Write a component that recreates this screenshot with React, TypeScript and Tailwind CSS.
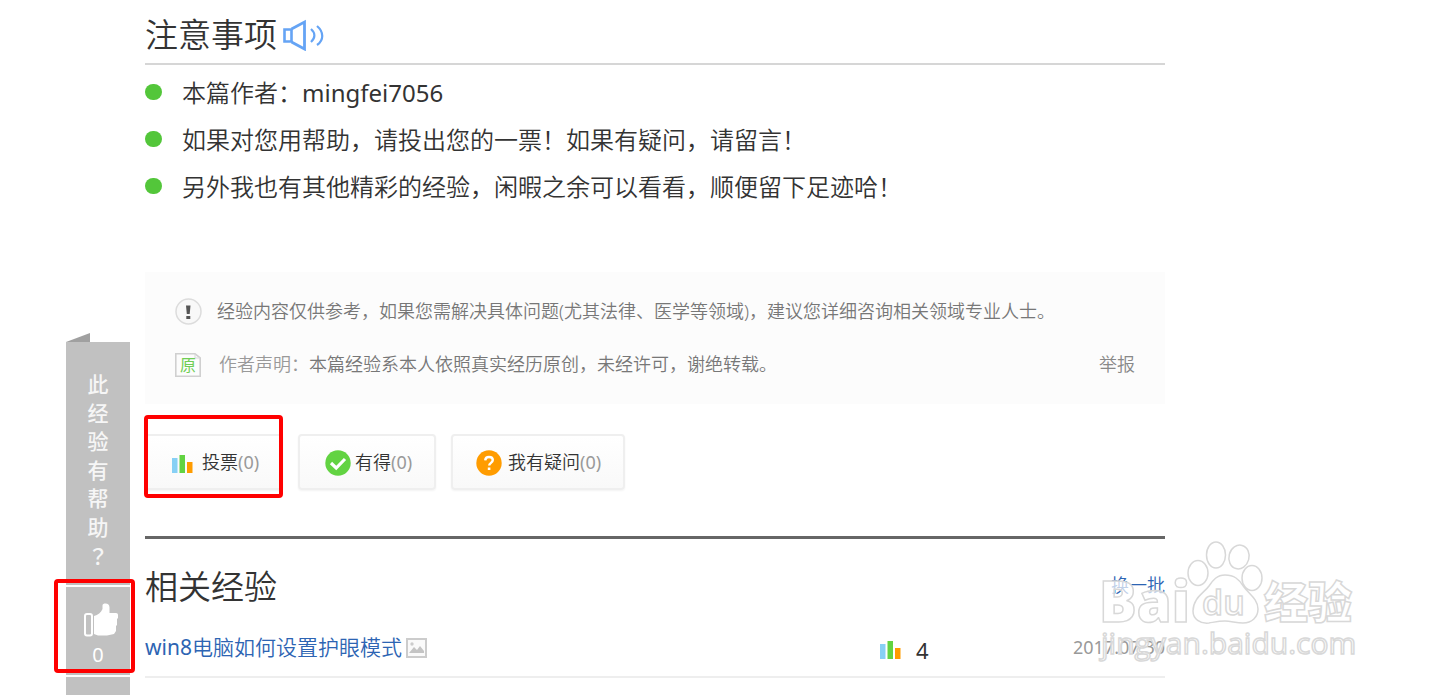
import React, { useState } from "react";

interface Note {
  id: number;
  text: string;
  author?: string;
}

interface Related {
  id: number;
  system: string;
  title: string;
  votes: number;
  date: string;
}

const notes: Note[] = [
  { id: 1, text: "本篇作者：", author: "mingfei7056" },
  { id: 2, text: "如果对您用帮助，请投出您的一票！如果有疑问，请留言！" },
  { id: 3, text: "另外我也有其他精彩的经验，闲暇之余可以看看，顺便留下足迹哈！" },
];

const related: Related[] = [
  { id: 1, system: "win8", title: "电脑如何设置护眼模式", votes: 4, date: "2017.07.30" },
];

const SpeakerIcon = () => (
  <svg width="42" height="32" viewBox="0 0 42 32" fill="none" stroke="#65a4f5">
    <path d="M1.500 10.500h7v12h-7z" strokeWidth="2.600" />
    <path d="M8.500 10 21.500 3v27L8.500 23" strokeWidth="2.800" />
    <path d="M28 10c4.500 4 4.500 9 0 13" strokeWidth="2.200" />
    <path d="M34 7c7 6 7 14 0 19" strokeWidth="2.200" />
  </svg>
);

const BarsIcon = () => (
  <svg width="21" height="19" viewBox="0 0 21 19" aria-hidden="true">
    <path d="M0 4h5.500v15H0z" fill="#87d0f5" />
    <path d="M7.500 1H13v18H7.500z" fill="#62d342" />
    <path d="M15 8h5.500v11H15z" fill="#ff9c00" />
  </svg>
);

const CheckIcon = () => (
  <svg width="26" height="26" viewBox="0 0 26 26" aria-hidden="true">
    <circle cx="13" cy="13" r="12.700" fill="#62d342" />
    <path d="m6 13 5.200 5L20 9" fill="none" stroke="#fff" strokeWidth="3.200" />
  </svg>
);

const QuestionIcon = () => (
  <svg width="26" height="26" viewBox="0 0 26 26" aria-hidden="true">
    <circle cx="13" cy="13" r="12.700" fill="#ff9c00" />
    <path
      d="M9.200 10.300c.2-2.300 1.800-3.300 3.800-3.300 2.200 0 3.800 1.200 3.800 3.100 0 2.800-3.600 2.700-3.600 5.400"
      fill="none"
      stroke="#fff"
      strokeWidth="2.400"
    />
    <path d="M11.800 17.500h2.600V20h-2.600z" fill="#fff" />
  </svg>
);

const NoticeIcon = () => (
  <svg width="27" height="27" viewBox="0 0 27 27" aria-hidden="true">
    <circle cx="13.500" cy="13.500" r="12.500" fill="#f8f8f8" stroke="#dcdcdc" strokeWidth="1.500" />
    <path d="M11 7.500h4.500l-.8 8.500h-2.900z" fill="#555" />
    <path d="M11.300 18h4v3h-4z" fill="#555" />
  </svg>
);

const OriginalIcon = () => (
  <span className="relative flex h-6 w-[26px] items-center justify-center text-[16px] font-normal leading-6 text-[#6fce54]">
    <svg className="absolute inset-0" width="26" height="24" viewBox="0 0 26 24" fill="none" aria-hidden="true">
      <path d="M.8.8H20L25.200 5v18.200H.8z" stroke="#d0d0d0" strokeWidth="1.600" />
      <path d="M20 .8V5h5" stroke="#d8d8d8" />
    </svg>
    原
  </span>
);

const PictureIcon = () => (
  <svg width="21" height="20" viewBox="0 0 21 20" aria-hidden="true">
    <path d="M1 1h19v18H1z" fill="#fafafa" stroke="#ccc" strokeWidth="2" />
    <circle cx="6" cy="6" r="1.700" fill="#ccc" />
    <path d="m3 15 5-6 3 3 3-4 4 5v2z" fill="#c4c4c4" />
  </svg>
);

const ThumbIcon = () => (
  <svg width="34" height="34" viewBox="0 0 34 34" aria-hidden="true">
    <rect x="1" y="11" width="7" height="21.500" rx="2" fill="none" stroke="#fff" strokeWidth="2" />
    <path
      d="M10 13c4-1 7-3.500 8.500-7V2.500C18.500 1 20 .5 21.500.5c2.500 0 4 1.500 4 4V10H32c1.200 0 2 .8 2 2v3l-1 1v6l-1 1v5l-2 3-7 1.500H14L10 31z"
      fill="#fff"
    />
  </svg>
);

const Watermark = () => (
  <svg
    className="pointer-events-none absolute -right-[194px] top-0"
    width="262"
    height="130"
    viewBox="0 0 262 130"
    fill="#fff"
    fillOpacity="0.7"
    stroke="#d8d8d8"
    strokeWidth="1.500"
    fontFamily="'Open Sans', 'Noto Sans CJK SC', sans-serif"
  >
    <text x="2" y="83" fontSize="56" fontWeight="800">Bai</text>
    <ellipse cx="101" cy="34" rx="10" ry="12.500" />
    <ellipse cx="119" cy="16" rx="9.500" ry="13" />
    <ellipse cx="142" cy="18" rx="10" ry="12" transform="rotate(15 142 18)" />
    <ellipse cx="155" cy="39" rx="10" ry="12.500" />
    <path d="M128 36c-8 0-12 5-16 11-5 7-16 12-16 25 0 8 7 13 16 12 6-1 10-2 16-2s11 2 18 2c9 0 15-6 15-14 0-10-9-15-14-22-5-8-10-12-19-12z" />
    <text x="105" y="76" fontSize="34" fontWeight="600">du</text>
    <text x="167" y="80" fontSize="44" fontWeight="900">经验</text>
    <text x="4" y="115" fontSize="30">jingyan.baidu.com</text>
  </svg>
);

const HelpRail = ({ votes, onVote }: { votes: number; onVote: () => void }) => (
  <aside className="flex w-16 shrink-0 flex-col gap-0.5 pt-[333px]">
    <div>
      <svg className="block" width="24" height="9" viewBox="0 0 24 9" aria-hidden="true">
        <path d="M0 9 24 0v9z" fill="#a0a0a0" />
      </svg>
      <p className="flex h-[243px] flex-col items-center justify-between bg-[#c1c1c1] pb-4 pt-7 text-[21px] font-medium leading-[28px] text-[#f6f6f6]">
        {"此经验有帮助？".split("").map((char) => (
          <span key={char} className="last:font-['Noto_Sans_CJK_TC',sans-serif]">
            {char}
          </span>
        ))}
      </p>
    </div>
    <div className="relative">
      <button
        className="flex h-[88px] w-full flex-col items-center bg-[#c1c1c1] pl-1.5 pt-4 text-white"
        onClick={onVote}
      >
        <ThumbIcon />
        <span className="pr-1.5 text-[20px] leading-9">{votes}</span>
      </button>
      <span className="pointer-events-none absolute -left-3 -right-[5px] -top-2 bottom-0.5 rounded-sm border-4 border-[#ff0000]" />
    </div>
    <div className="flex-1 bg-[#c1c1c1]" />
  </aside>
);

interface VoteButtonProps {
  icon: React.ReactNode;
  label: string;
  count: number;
  className: string;
  onClick: () => void;
}

const VoteButton = ({ icon, label, count, className, onClick }: VoteButtonProps) => (
  <button
    className={`flex h-14 items-center rounded border-2 border-[#efefef] bg-linear-to-b from-white to-[#f9f9f9] pt-0.5 text-[18px] leading-7 text-[#333] shadow-xs ${className}`}
    onClick={onClick}
  >
    {icon}
    <span className="pb-0.5 font-[350]">
      {label}
      <span className="font-normal text-[#999]">({count})</span>
    </span>
  </button>
);

const App = () => {
  const [helpful, setHelpful] = useState(0);
  const [votes, setVotes] = useState(0);
  const [learned, setLearned] = useState(0);
  const [questions, setQuestions] = useState(0);

  return (
    <div className="flex min-h-screen gap-[15px] overflow-hidden bg-white pl-[66px] font-['Noto_Sans','Noto_Sans_CJK_SC',sans-serif] text-[#333]">
      <HelpRail votes={helpful} onVote={() => setHelpful(helpful + 1)} />
      <main className="min-w-0 max-w-[1020px] flex-1">
        <div className="flex items-center gap-1.5 border-b-2 border-[#d6d6d6] pb-1 pt-[11px]">
          <h2 className="text-[33px] font-[350] leading-[48px]">注意事项</h2>
          <button aria-label="朗读">
            <SpeakerIcon />
          </button>
        </div>
        <ul className="pt-1 text-[24px] font-[350] leading-[47px]">
          {notes.map((note) => (
            <li key={note.id} className="flex items-center gap-5">
              <span className="mb-0.5 h-4 w-[17px] shrink-0 rounded-full bg-[#53c63a]" />
              <p>
                {note.text}
                {note.author && <span className="font-normal">{note.author}</span>}
              </p>
            </li>
          ))}
        </ul>

        <div className="mt-[62px] bg-[#fcfcfc] px-[30px] py-[13px] text-[18px] font-[350] leading-7 text-[#777]">
          <div className="flex h-[53px] items-center gap-[15px]">
            <NoticeIcon />
            <p className="pb-0.5">
              经验内容仅供参考，如果您需解决具体问题(尤其法律、医学等领域)，建议您详细咨询相关领域专业人士。
            </p>
          </div>
          <div className="flex h-[53px] items-center gap-[18px]">
            <OriginalIcon />
            <p className="flex-1 pb-0.5">
              <span className="text-[#999]">作者声明：</span>
              本篇经验系本人依照真实经历原创，未经许可，谢绝转载。
            </p>
            <a href="#report" className="pb-0.5 text-[#888]">
              举报
            </a>
          </div>
        </div>

        <div className="mt-[30px] flex gap-[15px]">
          <div className="relative">
            <VoteButton
              icon={<BarsIcon />}
              label="投票"
              count={votes}
              className="w-[138px] gap-[9px] pl-[25px]"
              onClick={() => setVotes(votes + 1)}
            />
            <span className="pointer-events-none absolute -bottom-2 -left-px right-0 -top-[19px] rounded-sm border-4 border-[#ff0000]" />
          </div>
          <VoteButton
            icon={<CheckIcon />}
            label="有得"
            count={learned}
            className="w-[138px] gap-1 pl-[25px]"
            onClick={() => setLearned(learned + 1)}
          />
          <VoteButton
            icon={<QuestionIcon />}
            label="我有疑问"
            count={questions}
            className="w-[174px] gap-[6px] pl-[23px]"
            onClick={() => setQuestions(questions + 1)}
          />
        </div>

        <section className="relative mt-[46px] border-t-[3px] border-[#666] pt-6">
          <div className="flex items-center justify-between">
            <h2 className="text-[33px] font-[350] leading-[48px]">相关经验</h2>
            <a href="#more" className="pb-1 text-[18px] font-[350] leading-7 text-[#2d64b3]">
              换一批
            </a>
          </div>
          <ul className="pt-2">
            {related.map((item) => (
              <li key={item.id} className="flex h-[59px] items-center border-b-2 border-[#eee]">
                <a
                  href="#win8"
                  className="flex flex-1 items-center gap-1 text-[21px] font-[350] leading-8 text-[#2d64b3]"
                >
                  <span className="pb-0.5">
                    <span className="font-normal">{item.system}</span>
                    {item.title}
                  </span>
                  <PictureIcon />
                </a>
                <div className="flex w-[285px] items-center gap-[15px] pt-1">
                  <BarsIcon />
                  <span className="text-[22px] leading-8">{item.votes}</span>
                  <span className="ml-auto pb-1.5 text-[18px] leading-7 text-[#999]">{item.date}</span>
                </div>
              </li>
            ))}
          </ul>
          <Watermark />
        </section>
      </main>
    </div>
  );
};

export default App;
